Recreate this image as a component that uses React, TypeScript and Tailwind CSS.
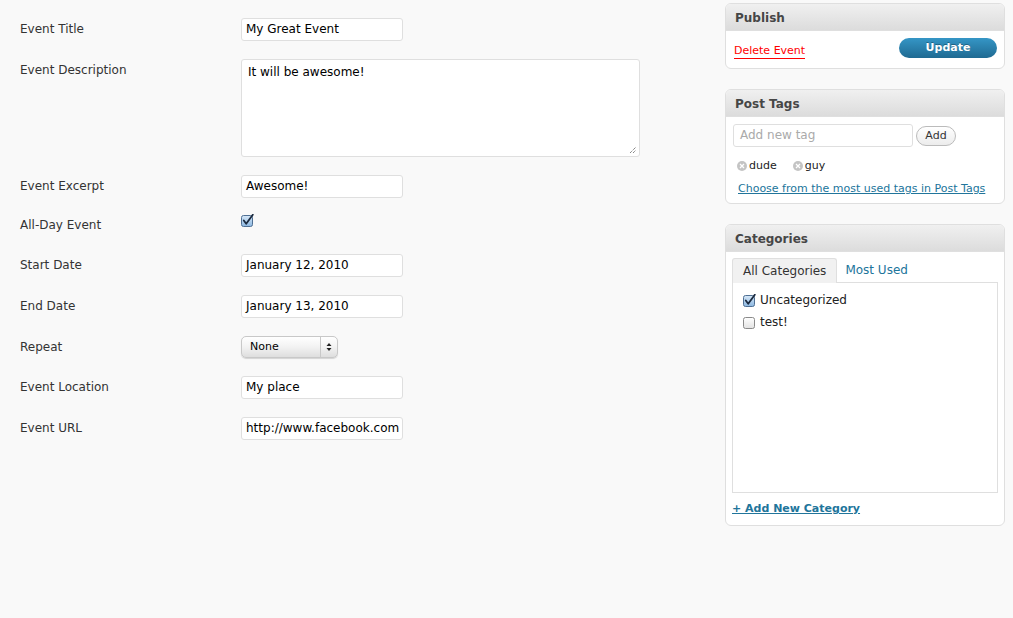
import React from 'react';

const font = "font-['DejaVu_Sans',sans-serif]";

function AquaCheck({ checked }: { checked?: boolean }) {
  return (
    <svg width="13" height="13" viewBox="0 0 13 13" className="block">
      <defs>
        <linearGradient id={checked ? 'cbOn' : 'cbOff'} x1="0" y1="0" x2="0" y2="1">
          <stop offset="0" stopColor={checked ? '#d7e8f8' : '#ffffff'} />
          <stop offset="1" stopColor={checked ? '#8bb6e0' : '#e2e2e2'} />
        </linearGradient>
      </defs>
      <rect x="0.5" y="1.5" width="11" height="11" rx="2" fill={`url(#${checked ? 'cbOn' : 'cbOff'})`} stroke={checked ? '#4f6f93' : '#8a8a8a'} />
      {checked && <path d="M2.8 6.5 L5.2 9.8 L11.8 0.8" fill="none" stroke="#1b2a3f" strokeWidth="1.8" strokeLinecap="round" strokeLinejoin="round" />}
    </svg>
  );
}

function Field({ value }: { value: string }) {
  return (
    <div className="h-[23px] w-[162px] bg-white border border-[#dfdfdf] rounded-[3px] px-[4px] text-[12px] leading-[21px] text-black overflow-hidden whitespace-nowrap">
      {value}
    </div>
  );
}

function Row({ label, children, className = '' }: { label: string; children: React.ReactNode; className?: string }) {
  return (
    <div className={`flex items-start ${className}`}>
      <div className="w-[221px] pt-[1px] text-[12px] leading-[21px] text-[#333]">{label}</div>
      {children}
    </div>
  );
}

function Box({ title, children, className = '' }: { title: string; children: React.ReactNode; className?: string }) {
  return (
    <div className={`bg-white border border-[#dfdfdf] rounded-[6px] overflow-hidden ${className}`}>
      <div className="h-[27px] px-[9px] pt-px bg-gradient-to-b from-[#f0f0f0] to-[#dcdcdc] border-b border-[#dfdfdf] text-[12px] font-bold leading-[26px] text-[#464646]">
        {title}
      </div>
      {children}
    </div>
  );
}

function RemoveTag() {
  return (
    <svg width="10" height="10" viewBox="0 0 10 10" className="block">
      <circle cx="5" cy="5" r="5" fill="#c4c4c4" />
      <path d="M3 3 L7 7 M7 3 L3 7" stroke="#fff" strokeWidth="1.3" />
    </svg>
  );
}

export default function App() {
  return (
    <div className={`w-[1013px] h-[618px] bg-[#f9f9f9] flex ${font}`}>
      <div className="w-[725px] pl-[20px] pt-[18px] flex flex-col">
        <Row label="Event Title">
          <Field value="My Great Event" />
        </Row>
        <Row label="Event Description" className="mt-[18px]">
          <div className="relative h-[98px] w-[399px] bg-white border border-[#dfdfdf] rounded-[3px] px-[6px] py-[3px] text-[12px] leading-[18px] text-black">
            It will be awesome!
            <svg width="8" height="8" viewBox="0 0 8 8" className="absolute right-[2px] bottom-[2px]">
              <path d="M1 7 L7 1 M4 7 L7 4" stroke="#555" strokeWidth="1" strokeDasharray="1 1" />
            </svg>
          </div>
        </Row>
        <Row label="Event Excerpt" className="mt-[18px]">
          <Field value="Awesome!" />
        </Row>
        <Row label="All-Day Event" className="mt-[16px] h-[23px]">
          <AquaCheck checked />
        </Row>
        <Row label="Start Date" className="mt-[17px]">
          <Field value="January 12, 2010" />
        </Row>
        <Row label="End Date" className="mt-[18px]">
          <Field value="January 13, 2010" />
        </Row>
        <Row label="Repeat" className="mt-[18px]">
          <div className="h-[22px] w-[97px] flex rounded-[5px] border border-[#c8c8c8] bg-gradient-to-b from-[#ffffff] via-[#f2f2f2] to-[#dedede] shadow-[0_1px_1px_rgba(0,0,0,0.15)]">
            <div className="flex-1 pl-[8px] text-[11px] leading-[20px] text-black">None</div>
            <div className="w-[17px] border-l border-[#c8c8c8] flex items-center justify-center">
              <svg width="6" height="10" viewBox="0 0 6 10">
                <path d="M0.5 4 L3 1 L5.5 4 Z M0.5 6 L3 9 L5.5 6 Z" fill="#222" />
              </svg>
            </div>
          </div>
        </Row>
        <Row label="Event Location" className="mt-[18px]">
          <Field value="My place" />
        </Row>
        <Row label="Event URL" className="mt-[18px]">
          <Field value="http://www.facebook.com" />
        </Row>
      </div>

      <div className="w-[280px] pt-[3px] flex flex-col">
        <Box title="Publish">
          <div className="h-[37px] flex items-center justify-between pl-[8px] pr-[7px]">
            <a className="text-[11px] text-[#ff0000] border-b border-[#ff0000] leading-[14px] mt-[4px]">Delete Event</a>
            <button className="h-[20px] w-[98px] rounded-full bg-gradient-to-b from-[#3596c6] to-[#1f6a92] text-white text-[11px] font-bold leading-[20px] [text-shadow:0_-1px_0_rgba(0,0,0,0.3)] -mt-[3px]">
              Update
            </button>
          </div>
        </Box>

        <Box title="Post Tags" className="mt-[20px]">
          <div className="px-[7px] pt-[7px] pb-[7px]">
            <div className="flex items-center">
              <div className="h-[23px] w-[180px] border border-[#dfdfdf] rounded-[3px] px-[6px] text-[12px] leading-[21px] text-[#aaa]">
                Add new tag
              </div>
              <button className="ml-[3px] h-[20px] w-[40px] rounded-full border border-[#bbb] bg-gradient-to-b from-white to-[#ececec] text-[11px] leading-[18px] text-[#333]">
                Add
              </button>
            </div>
            <div className="flex items-center mt-[12px] pl-[4px] text-[11px] text-[#222] leading-[14px]">
              <RemoveTag />
              <span className="ml-[2px]">dude</span>
              <span className="ml-[16px]"><RemoveTag /></span>
              <span className="ml-[2px]">guy</span>
            </div>
            <a className="block mt-[9px] pl-[5px] text-[11px] leading-[14px] text-[#21759b] underline">
              Choose from the most used tags in Post Tags
            </a>
          </div>
        </Box>

        <Box title="Categories" className="mt-[20px]">
          <div className="px-[6px] pt-[5px] pb-[9px]">
            <div className="flex items-end h-[25px]">
              <div className="h-[25px] px-[10px] bg-[#f1f1f1] border border-[#dfdfdf] border-b-0 rounded-t-[3px] text-[12px] leading-[24px] text-[#333] -mb-px relative z-10">
                All Categories
              </div>
              <div className="px-[8px] text-[12px] leading-[24px] text-[#21759b]">Most Used</div>
            </div>
            <div className="h-[211px] w-[266px] border border-[#dfdfdf] bg-white px-[10px] pt-[9px]">
              <div className="flex items-center h-[16px]">
                <AquaCheck checked />
                <span className="ml-[4px] text-[12px] text-[#222]">Uncategorized</span>
              </div>
              <div className="flex items-center h-[16px] mt-[6px]">
                <AquaCheck />
                <span className="ml-[4px] text-[12px] text-[#222]">test!</span>
              </div>
            </div>
            <a className="block mt-[9px] text-[11px] font-bold leading-[14px] text-[#21759b] underline">
              + Add New Category
            </a>
          </div>
        </Box>
      </div>
    </div>
  );
}
